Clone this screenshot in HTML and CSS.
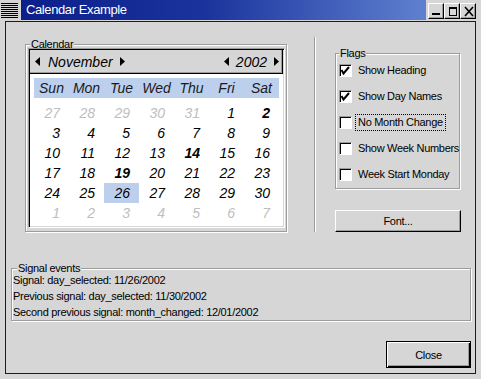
FILE: index.html
```html
<!DOCTYPE html>
<html>
<head>
<meta charset="utf-8">
<title>Calendar Example</title>
<link rel="stylesheet" href="styles.css">
</head>
<body>
<div class="window">
  <div class="titlebar">
    <div class="menu-icon">
      <svg width="17" height="16" viewBox="0 0 17 16">
        <rect x="0" y="0" width="17" height="1" fill="#000"/>
        <rect x="0" y="2" width="17" height="1" fill="#000"/>
        <rect x="0" y="4" width="17" height="1" fill="#000"/>
        <rect x="0" y="6" width="17" height="1" fill="#000"/>
        <rect x="0" y="8" width="17" height="1" fill="#000"/>
        <rect x="0" y="10" width="17" height="1" fill="#000"/>
        <rect x="0" y="12" width="17" height="1" fill="#000"/>
        <rect x="0" y="14" width="17" height="1" fill="#000"/>
      </svg>
    </div>
    <div class="title">Calendar Example</div>
    <div class="wm-buttons">
      <span class="wm-btn"><svg width="14" height="14" viewBox="0 0 14 14"><rect x="3" y="9" width="8" height="2" fill="#000"/></svg></span>
      <span class="wm-btn"><svg width="14" height="14" viewBox="0 0 14 14"><rect x="4.5" y="3.5" width="7" height="8" fill="none" stroke="#000" stroke-width="1"/><rect x="4" y="3" width="8" height="2" fill="#000"/></svg></span>
      <span class="wm-btn"><svg width="14" height="14" viewBox="0 0 14 14"><path d="M4 3 L12 12 M12 3 L4 12" stroke="#000" stroke-width="1.6" fill="none"/></svg></span>
    </div>
  </div>

  <div class="client">
    <div class="top">
      <fieldset class="frame cal-frame">
        <legend>Calendar</legend>
        <div class="calendar">
          <div class="cal-head">
            <div class="nav">
              <svg class="arrow" width="5" height="9" viewBox="0 0 5 9"><polygon points="5,0 5,9 0,4.5" fill="#000"/></svg>
              <span class="nav-month">November</span>
              <svg class="arrow" width="5" height="9" viewBox="0 0 5 9"><polygon points="0,0 5,4.5 0,9" fill="#000"/></svg>
            </div>
            <div class="nav">
              <svg class="arrow" width="5" height="9" viewBox="0 0 5 9"><polygon points="5,0 5,9 0,4.5" fill="#000"/></svg>
              <span class="nav-year">2002</span>
              <svg class="arrow" width="5" height="9" viewBox="0 0 5 9"><polygon points="0,0 5,4.5 0,9" fill="#000"/></svg>
            </div>
          </div>
          <div class="daynames">
            <span>Sun</span><span>Mon</span><span>Tue</span><span>Wed</span><span>Thu</span><span>Fri</span><span>Sat</span>
          </div>
          <div class="days">
            <span class="other">27</span><span class="other">28</span><span class="other">29</span><span class="other">30</span><span class="other">31</span><span>1</span><span class="marked">2</span>
            <span>3</span><span>4</span><span>5</span><span>6</span><span>7</span><span>8</span><span>9</span>
            <span>10</span><span>11</span><span>12</span><span>13</span><span class="marked">14</span><span>15</span><span>16</span>
            <span>17</span><span>18</span><span class="marked">19</span><span>20</span><span>21</span><span>22</span><span>23</span>
            <span>24</span><span>25</span><span class="selected">26</span><span>27</span><span>28</span><span>29</span><span>30</span>
            <span class="other">1</span><span class="other">2</span><span class="other">3</span><span class="other">4</span><span class="other">5</span><span class="other">6</span><span class="other">7</span>
          </div>
        </div>
      </fieldset>

      <div class="vsep"></div>

      <div class="side">
        <fieldset class="frame flags">
          <legend>Flags</legend>
          <div class="flag-list">
            <div class="flag"><span class="check"><svg width="11" height="11" viewBox="0 0 11 11"><polyline points="1.5,5 3.5,8.5 9,2" fill="none" stroke="#000" stroke-width="2"/></svg></span><span class="flag-label">Show Heading</span></div>
            <div class="flag"><span class="check"><svg width="11" height="11" viewBox="0 0 11 11"><polyline points="1.5,5 3.5,8.5 9,2" fill="none" stroke="#000" stroke-width="2"/></svg></span><span class="flag-label">Show Day Names</span></div>
            <div class="flag"><span class="check"></span><span class="flag-label focus">No Month Change</span></div>
            <div class="flag"><span class="check"></span><span class="flag-label">Show Week Numbers</span></div>
            <div class="flag"><span class="check"></span><span class="flag-label">Week Start Monday</span></div>
          </div>
        </fieldset>
        <button class="btn font-btn">Font...</button>
      </div>
    </div>

    <fieldset class="frame signals">
      <legend>Signal events</legend>
      <div class="signal-lines">
        <div class="signal">Signal: day_selected: 11/26/2002</div>
        <div class="signal">Previous signal: day_selected: 11/30/2002</div>
        <div class="signal">Second previous signal: month_changed: 12/01/2002</div>
      </div>
    </fieldset>

    <div class="actions">
      <button class="btn close-btn">Close</button>
    </div>
  </div>
</div>
</body>
</html>
```

FILE: styles.css
```css
* { box-sizing: border-box; }

html, body {
  margin: 0;
  padding: 0;
}

body {
  width: 481px;
  height: 379px;
  overflow: hidden;
  background: #d6d6d6;
  font-family: "Liberation Sans", Arial, sans-serif;
  font-size: 11px;
  letter-spacing: -0.3px;
  color: #000;
}

.window {
  width: 481px;
  height: 379px;
  background: #d6d6d6;
  display: flex;
  flex-direction: column;
}

/* ---------- title bar ---------- */
.titlebar {
  display: flex;
  height: 20px;
}

.menu-icon {
  width: 21px;
  height: 20px;
  padding: 3px 0 0 1px;
}

.menu-icon svg { display: block; }

.title {
  flex: 1;
  background: linear-gradient(90deg, #0c1f8a 0%, #1a339c 45%, #5f80d0 100%);
  color: #fff;
  font-size: 13px;
  letter-spacing: -0.4px;
  line-height: 20px;
  padding-left: 5px;
  white-space: nowrap;
}

.wm-buttons {
  width: 55px;
  display: flex;
  padding: 3px 0 0 2px;
}

.wm-btn {
  display: block;
  width: 16px;
  height: 16px;
  border: 1px solid;
  border-color: #fff #000 #000 #fff;
  box-shadow: inset -1px -1px #9c9c9c;
  background: #d6d6d6;
}

.wm-btn svg { display: block; }

/* ---------- client area ---------- */
.client {
  margin: 1px 5px 0;
  height: 353px;
  border: 1px solid #1c1c1c;
  display: flex;
  flex-direction: column;
}

.top {
  display: flex;
  margin-top: 15px;
}

/* etched frames */
.frame {
  margin: 0;
  padding: 0;
  min-width: 0;
  border: 1px solid #9c9c9c;
  box-shadow: inset 1px 1px #fff, 1px 1px #fff;
}

.frame > legend {
  padding: 0 1px;
  margin-left: 4px;
  line-height: 12px;
  font-size: 11px;
  background: #d6d6d6;
}

.cal-frame {
  margin-top: 1px;
  margin-left: 19px;
  width: 262px;
  padding-bottom: 1px;
}

/* ---------- calendar ---------- */
.calendar {
  margin: -2px 0 0 2px;
  width: 257px;
  height: 180px;
  padding: 1px;
  background: #fff;
  border: 1px solid;
  border-color: #9c9c9c #fff #fff #9c9c9c;
  box-shadow: inset 1px 1px #000, inset -1px -1px #d6d6d6;
  font-style: italic;
  font-size: 14px;
  letter-spacing: 0;
}

.cal-head {
  height: 24px;
  background: #d6d6d6;
  display: flex;
  justify-content: space-between;
  align-items: center;
  padding: 0 3px 0 5px;
  border-right: 1px solid #000;
  border-bottom: 1px solid #000;
  box-shadow: inset -1px -1px #9c9c9c;
}

.nav {
  display: flex;
  align-items: center;
}

.arrow { display: block; }

.nav-month { margin: 0 7px 0 8px; line-height: 16px; }
.nav-year { margin: 0 7px; line-height: 16px; }

.daynames {
  margin: 4px 0 0 4px;
  width: 245px;
  height: 20px;
  background: #bcd0ee;
  display: grid;
  grid-template-columns: repeat(7, 35px);
  line-height: 20px;
  text-align: center;
  color: #1a1a1a;
}

.days {
  margin: 5px 0 0 4px;
  width: 245px;
  display: grid;
  grid-template-columns: repeat(7, 35px);
  grid-auto-rows: 20px;
  line-height: 20px;
  text-align: right;
}

.days span { padding-right: 9px; }
.days .other { color: #bebebe; }
.days .marked { font-weight: bold; }
.days .selected { background: #bcd0ee; }

/* ---------- separator ---------- */
.vsep {
  width: 2px;
  margin-left: 27px;
  border-left: 1px solid #9c9c9c;
  border-right: 1px solid #fff;
}

/* ---------- side column ---------- */
.side {
  margin-left: 19px;
  width: 126px;
  display: flex;
  flex-direction: column;
}

.flags {
  margin-top: 10px;
  width: 125px;
  padding-bottom: 1px;
}

.flags > legend { margin-left: 3px; }

.flag-list { margin-top: -2px; }

.flag {
  display: flex;
  align-items: center;
  height: 26px;
  padding-left: 3px;
}

.check {
  display: block;
  width: 13px;
  height: 13px;
  flex: none;
  background: #fff;
  border: 1px solid;
  border-color: #9c9c9c #fff #fff #9c9c9c;
  box-shadow: inset 1px 1px #000;
}

.check svg { display: block; }

.flag-label {
  margin-left: 3px;
  padding: 1px 2px;
  line-height: 13px;
  border: 1px solid transparent;
  white-space: nowrap;
}

.flag-label.focus { border: 1px dotted #000; }

.btn {
  font-family: "Liberation Sans", Arial, sans-serif;
  font-size: 11px;
  letter-spacing: -0.3px;
  color: #000;
  background: #d6d6d6;
  padding: 0;
  margin: 0;
  border: 1px solid;
  border-color: #fff #000 #000 #fff;
  box-shadow: inset -1px -1px #9c9c9c;
  border-radius: 0;
}

.font-btn {
  margin-top: 21px;
  width: 126px;
  height: 22px;
}

/* ---------- signals ---------- */
.signals {
  margin: 30px 4px 0 5px;
  padding: 0 0 0 1px;
}

.signals > legend { margin-left: 4px; }

.signal-lines { margin-top: -2px; }

.signal {
  line-height: 16px;
  white-space: nowrap;
}

/* ---------- actions ---------- */
.actions {
  margin-top: auto;
  display: flex;
  justify-content: flex-end;
  padding: 0 4px 5px 0;
}

.close-btn {
  width: 85px;
  height: 27px;
  border: 1px solid #000;
  box-shadow: inset 1px 1px #fff, inset -1px -1px #000, inset -2px -2px #9c9c9c;
}
```
